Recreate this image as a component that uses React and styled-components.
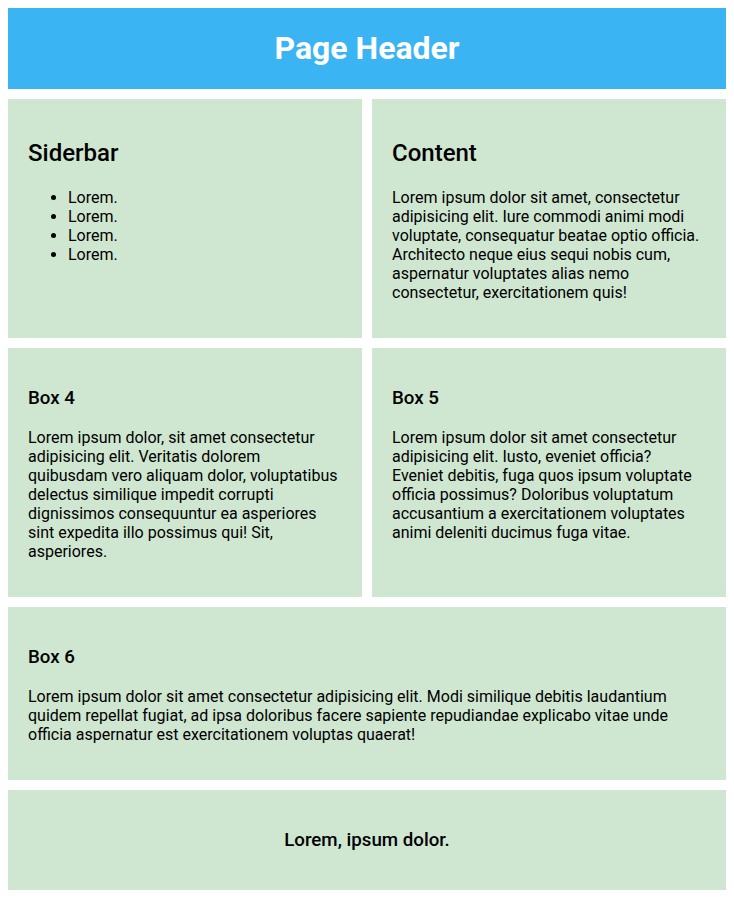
import React from "react";
import styled, { createGlobalStyle } from "styled-components";

const GlobalStyle = createGlobalStyle`
  body {
    margin: 8px;
    font-family: Roboto, "Liberation Sans", sans-serif;
    color: #000;
    background: #fff;
  }
`;

const Layout = styled.div`
  display: grid;
  grid-template-columns: 1fr 1fr;
  gap: 10px;
`;

const Header = styled.header`
  grid-column: 1 / -1;
  background-color: #3bb4f4;
  color: #fff;
  text-align: center;

  h1 {
    font-size: 32px;
    font-weight: bold;
    margin: 21.44px 0;
  }
`;

const Card = styled.div`
  grid-column: ${(p) => (p.$wide ? "1 / -1" : "auto")};
  background-color: #cfe6d0;
  padding: 20px;

  h2 {
    font-size: 24px;
    font-weight: 500;
    line-height: 1.22;
    margin: 19.92px 0;
  }

  h3 {
    font-size: 18.72px;
    font-weight: 500;
    line-height: 1.22;
    margin: 18.72px 0;
  }

  p,
  ul {
    font-size: 16px;
    margin: 16px 0;
  }

  ul {
    padding-left: 40px;
  }
`;

const Footer = styled.footer`
  grid-column: 1 / -1;
  background-color: #cfe6d0;
  padding: 20px;
  text-align: center;

  h3 {
    font-size: 18.72px;
    font-weight: 500;
    line-height: 1.2;
    margin: 18.72px 0;
  }
`;

const App = () => {
  return (
    <>
      <GlobalStyle />
      <Layout>
        <Header>
          <h1>Page Header</h1>
        </Header>

        <Card>
          <h2>Siderbar</h2>
          <ul>
            <li>Lorem.</li>
            <li>Lorem.</li>
            <li>Lorem.</li>
            <li>Lorem.</li>
          </ul>
        </Card>

        <Card>
          <h2>Content</h2>
          <p>
            Lorem ipsum dolor sit amet, consectetur adipisicing elit. Iure
            commodi animi modi voluptate, consequatur beatae optio officia.
            Architecto neque eius sequi nobis cum, aspernatur voluptates alias
            nemo consectetur, exercitationem quis!
          </p>
        </Card>

        <Card>
          <h3>Box 4</h3>
          <p>
            Lorem ipsum dolor, sit amet consectetur adipisicing elit. Veritatis
            dolorem quibusdam vero aliquam dolor, voluptatibus delectus
            similique impedit corrupti dignissimos consequuntur ea asperiores
            sint expedita illo possimus qui! Sit, asperiores.
          </p>
        </Card>

        <Card>
          <h3>Box 5</h3>
          <p>
            Lorem ipsum dolor sit amet consectetur adipisicing elit. Iusto,
            eveniet officia? Eveniet debitis, fuga quos ipsum voluptate officia
            possimus? Doloribus voluptatum accusantium a exercitationem
            voluptates animi deleniti ducimus fuga vitae.
          </p>
        </Card>

        <Card $wide>
          <h3>Box 6</h3>
          <p>
            Lorem ipsum dolor sit amet consectetur adipisicing elit. Modi
            similique debitis laudantium quidem repellat fugiat, ad ipsa
            doloribus facere sapiente repudiandae explicabo vitae unde officia
            aspernatur est exercitationem voluptas quaerat!
          </p>
        </Card>

        <Footer>
          <h3>Lorem, ipsum dolor.</h3>
        </Footer>
      </Layout>
    </>
  );
};

export default App;
